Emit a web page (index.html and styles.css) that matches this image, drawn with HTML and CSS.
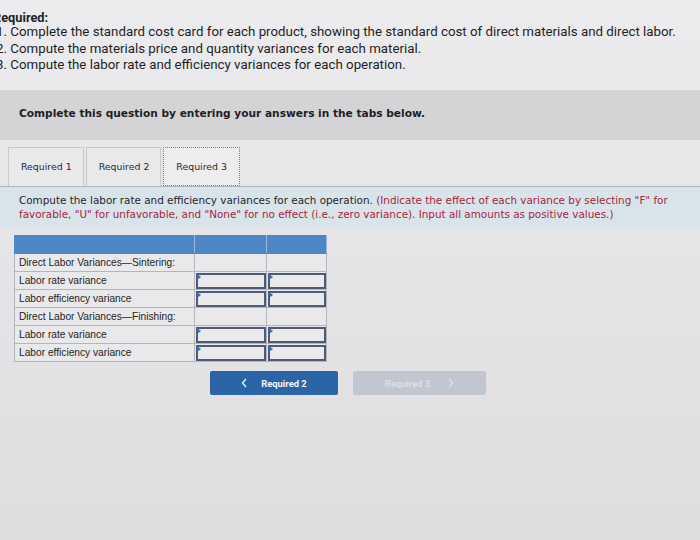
FILE: index.html
```html
<!DOCTYPE html>
<html>
<head>
<meta charset="utf-8">
<link rel="stylesheet" href="styles.css">
</head>
<body>
<div class="req">
  <div class="req-title">Required:</div>
  <div class="req-line">1. Complete the standard cost card for each product, showing the standard cost of direct materials and direct labor.</div>
  <div class="req-line">2. Compute the materials price and quantity variances for each material.</div>
  <div class="req-line">3. Compute the labor rate and efficiency variances for each operation.</div>
</div>
<div class="band">Complete this question by entering your answers in the tabs below.</div>
<div class="tabs">
  <div class="tab">Required 1</div>
  <div class="tab">Required 2</div>
  <div class="tab active">Required 3</div>
</div>
<div class="panel">Compute the labor rate and efficiency variances for each operation. <span class="red">(Indicate the effect of each variance by selecting "F" for favorable, "U" for unfavorable, and "None" for no effect (i.e., zero variance). Input all amounts as positive values.)</span></div>
<table class="grid">
  <tr class="head"><td class="c1"></td><td class="c2"></td><td class="c3"></td></tr>
  <tr><td class="c1">Direct Labor Variances—Sintering:</td><td class="c2"></td><td class="c3"></td></tr>
  <tr><td class="c1">Labor rate variance</td><td class="c2 in"><div class="box"></div></td><td class="c3 in"><div class="box"></div></td></tr>
  <tr><td class="c1">Labor efficiency variance</td><td class="c2 in"><div class="box"></div></td><td class="c3 in"><div class="box"></div></td></tr>
  <tr><td class="c1">Direct Labor Variances—Finishing:</td><td class="c2"></td><td class="c3"></td></tr>
  <tr><td class="c1">Labor rate variance</td><td class="c2 in"><div class="box"></div></td><td class="c3 in"><div class="box"></div></td></tr>
  <tr><td class="c1">Labor efficiency variance</td><td class="c2 in"><div class="box"></div></td><td class="c3 in"><div class="box"></div></td></tr>
</table>
<div class="nav">
  <div class="btn prev"><svg class="chev" width="6" height="10" viewBox="0 0 6 10"><path d="M5 1 L1.5 5 L5 9" fill="none" stroke="currentColor" stroke-width="1.3"/></svg>Required 2</div>
  <div class="btn next">Required 3<svg class="chev" width="6" height="10" viewBox="0 0 6 10"><path d="M1 1 L4.5 5 L1 9" fill="none" stroke="currentColor" stroke-width="1.3"/></svg></div>
</div>
</body>
</html>
```
FILE: styles.css
```css
html, body {
  margin: 0;
  padding: 0;
}
body {
  width: 700px;
  height: 540px;
  overflow: hidden;
  background: linear-gradient(180deg, #ecebed 0%, #e6e5e7 40%, #dfdde0 100%);
  font-family: "Liberation Sans", Arial, sans-serif;
  color: #1d1d22;
}
.req {
  padding-top: 12px;
  margin-left: -4px;
  font-family: Roboto, "Liberation Sans", sans-serif;
  font-size: 13.3px;
  line-height: 16.6px;
  height: 90px;
  box-sizing: border-box;
  color: #1f1f26;
}
.req-title {
  font-weight: bold;
  font-size: 12.8px;
  line-height: 12px;
  margin-left: -3px;
}
.band {
  height: 50px;
  box-sizing: border-box;
  background: #d4d3d6;
  padding: 17px 0 0 19px;
  font-family: "DejaVu Sans", Verdana, sans-serif;
  font-weight: bold;
  font-size: 10.6px;
  color: #1e1e24;
}
.tabs {
  display: flex;
  margin-top: 7px;
  padding-left: 8px;
  height: 39px;
  gap: 2px;
}
.tab {
  box-sizing: border-box;
  height: 39px;
  padding: 13px 11px 0 12px;
  border: 1px solid #c9c8cb;
  border-bottom: none;
  background: #e9e8ea;
  font-family: "DejaVu Sans", Verdana, sans-serif;
  font-size: 9.4px;
  color: #2a2a30;
}
.tab.active {
  background: #edecee;
  border: 1px dotted #6f7f96;
  padding-left: 12px;
  padding-right: 12px;
}
.panel {
  box-sizing: border-box;
  height: 42px;
  background: #d8e3ea;
  border-top: 1px solid #a9b8c6;
  padding: 6px 8px 0 19px;
  font-family: "DejaVu Sans", Verdana, sans-serif;
  font-size: 10.4px;
  line-height: 14px;
  color: #26262c;
}
.red {
  color: #a8253a;
}
.grid {
  margin: 7px 0 0 14px;
  border-collapse: collapse;
  font-family: "Liberation Sans", Arial, sans-serif;
  font-size: 10.2px;
  color: #1f1f25;
}
.grid td {
  height: 18px;
  padding: 0;
  box-sizing: border-box;
  border: 1px solid #b6b5b9;
  background: #e9e8ea;
  white-space: nowrap;
}
.grid .head td {
  background: #4e86c6;
  border-color: #4e86c6;
  border-right: 1px solid #9bb6d6;
}
.c1 {
  width: 180px;
  padding-left: 4px !important;
}
.c2 {
  width: 72px;
}
.c3 {
  width: 60px;
}
.grid td.in {
  position: relative;
}
.box {
  position: absolute;
  left: 1px;
  top: 1px;
  right: 0;
  bottom: 0;
  border: 2px solid #4f5a76;
  background: #eae9eb;
}
.box::before {
  content: "";
  position: absolute;
  left: -1px;
  top: -1px;
  border-left: 4px solid #2f6ec2;
  border-top: 3px solid transparent;
  border-bottom: 3px solid transparent;
  height: 0;
  width: 0;
}
.nav {
  display: flex;
  margin: 9px 0 0 210px;
  gap: 15px;
}
.btn {
  height: 24px;
  box-sizing: border-box;
  display: flex;
  align-items: center;
  justify-content: center;
  font-family: Roboto, "Liberation Sans", sans-serif;
  font-weight: bold;
  font-size: 9.4px;
  border-radius: 2px;
}
.prev {
  width: 128px;
  background: #2c64a8;
  color: #f4f6fa;
}
.prev .chev {
  margin: 0 14px 0 0;
}
.next {
  width: 133px;
  background: #c2c6ce;
  color: #dde0e6;
}
.next .chev {
  margin: 0 0 0 18px;
}
```
